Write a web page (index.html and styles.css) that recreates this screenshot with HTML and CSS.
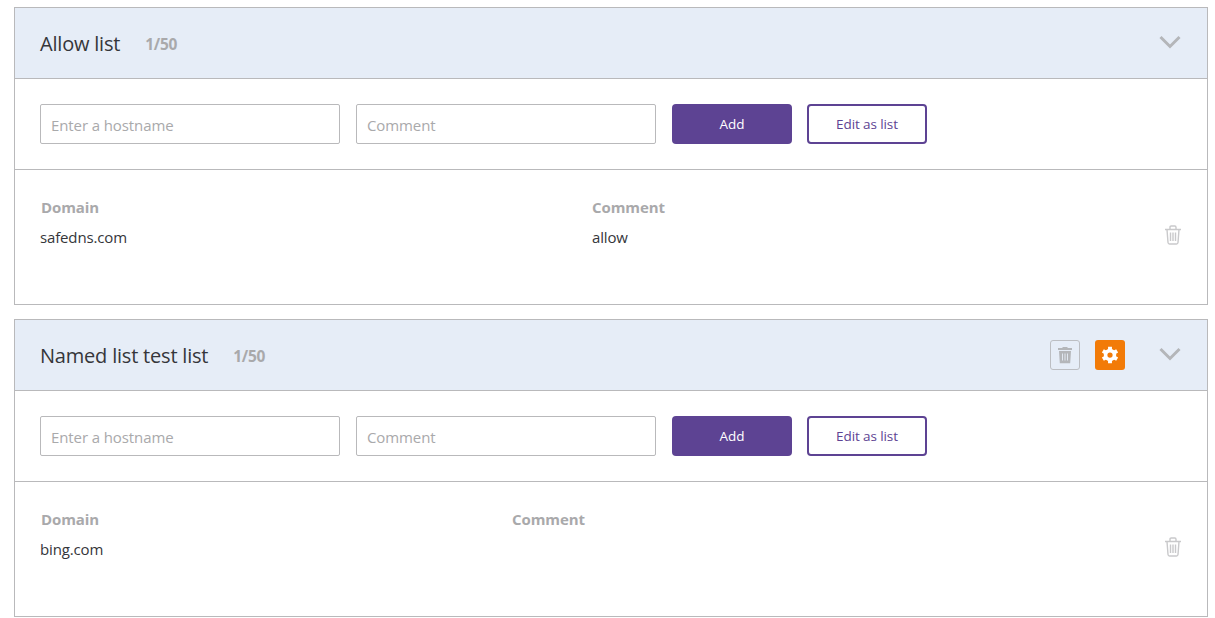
FILE: index.html
```html
<!DOCTYPE html>
<html lang="en">
<head>
<meta charset="utf-8">
<title>Lists</title>
<link rel="stylesheet" href="styles.css">
</head>
<body>
<svg class="defs" width="0" height="0" aria-hidden="true">
  <symbol id="trash" viewBox="0 0 18 20">
    <path d="M1 4.500h16M6 4.500V2.200C6 1.500 6.500 1 7.200 1h3.600c.7 0 1.200.5 1.200 1.200v2.300M3 4.500l1 13c.1.900.7 1.500 1.500 1.500h7c.8 0 1.400-.6 1.500-1.500l1-13M6.500 7.500v8.500M9 7.500v8.500M11.500 7.500v8.500" fill="none" stroke="currentColor" stroke-width="1.400"/>
  </symbol>
  <symbol id="chevron" viewBox="0 0 22 14">
    <path d="M1.500 2 11 11.500 20.500 2" fill="none" stroke="currentColor" stroke-width="3"/>
  </symbol>
</svg>

<section class="panel">
  <header class="panel-head">
    <h2 class="panel-title">Allow list</h2>
    <span class="panel-count">1/50</span>
    <svg class="chevron"><use href="#chevron"/></svg>
  </header>
  <form class="entry-row">
    <input class="field" type="text" placeholder="Enter a hostname">
    <input class="field" type="text" placeholder="Comment">
    <button class="btn btn-primary" type="button">Add</button>
    <button class="btn btn-outline" type="button">Edit as list</button>
  </form>
  <div class="entries entries-wide">
    <span class="col-label">Domain</span>
    <span class="col-label">Comment</span>
    <span></span>
    <span class="cell">safedns.com</span>
    <span class="cell">allow</span>
    <svg class="row-trash"><use href="#trash"/></svg>
  </div>
</section>

<section class="panel">
  <header class="panel-head">
    <h2 class="panel-title">Named list test list</h2>
    <span class="panel-count">1/50</span>
    <span class="head-actions">
      <span class="icon-btn icon-btn-muted">
        <svg class="head-trash" viewBox="0 0 16 18"><path d="M5.500 2V1h5v1H15v2H1V2zM2 5h12l-.8 12.200H2.800z" fill="currentColor"/><path d="M5.500 7.500v7M8 7.500v7M10.500 7.500v7" stroke="#e6edf7" stroke-width=".9"/></svg>
      </span>
      <span class="icon-btn icon-btn-orange">
        <svg class="gear" viewBox="0 0 24 24" fill="none" stroke="currentColor">
          <circle cx="12" cy="12" r="5.900" stroke-width="4.800"/>
          <path stroke-width="5.200" d="M12 1v5M12 18v5M2.470 6.500l4.330 2.500M17.200 15l4.330 2.500M2.470 17.500l4.330-2.500M17.200 9l4.330-2.500"/>
        </svg>
      </span>
    </span>
    <svg class="chevron chevron-after-actions"><use href="#chevron"/></svg>
  </header>
  <form class="entry-row">
    <input class="field" type="text" placeholder="Enter a hostname">
    <input class="field" type="text" placeholder="Comment">
    <button class="btn btn-primary" type="button">Add</button>
    <button class="btn btn-outline" type="button">Edit as list</button>
  </form>
  <div class="entries entries-narrow">
    <span class="col-label">Domain</span>
    <span class="col-label">Comment</span>
    <span></span>
    <span class="cell">bing.com</span>
    <span class="cell"></span>
    <svg class="row-trash"><use href="#trash"/></svg>
  </div>
</section>
</body>
</html>
```

FILE: styles.css
```css
* { box-sizing: border-box; }

html, body { height: 100%; overflow: hidden; }

body {
  margin: 0;
  padding: 7px 7px 0 14px;
  background: #fff;
  color: #35363a;
  font-family: "Open Sans", "Noto Sans", sans-serif;
}

.defs { position: absolute; }

.panel {
  height: 298px;
  margin-bottom: 14px;
  border: 1px solid #b9b9bb;
}

.panel-head {
  display: flex;
  align-items: center;
  height: 71px;
  padding: 0 26px 0 25px;
  background: #e6edf7;
  border-bottom: 1px solid #b9b9bb;
}

.panel-title {
  margin: 0;
  font-size: 20px;
  font-weight: 500;
  letter-spacing: -0.2px;
  color: #35363a;
}

.panel-count {
  margin-left: 25px;
  padding-top: 1px;
  font-size: 15.500px;
  font-weight: 700;
  letter-spacing: -0.3px;
  color: #a9a9ab;
}

.chevron {
  width: 22px;
  height: 14px;
  margin-bottom: 2px;
  margin-left: auto;
  color: #b4b6b9;
}

.chevron-after-actions { margin-left: 34px; }

.head-actions {
  display: flex;
  gap: 15px;
  margin-left: auto;
}

.icon-btn {
  display: flex;
  align-items: center;
  justify-content: center;
  width: 30px;
  height: 30px;
  border-radius: 3px;
}

.icon-btn-muted {
  border: 1px solid #bcbec2;
  color: #b4b6b9;
}

.icon-btn-orange {
  background: #f27b08;
  color: #fff;
}

.head-trash { width: 16px; height: 18px; }

.gear { width: 18px; height: 18px; }

.entry-row {
  display: flex;
  align-items: center;
  height: 91px;
  padding: 0 25px;
  border-bottom: 1px solid #b9b9bb;
}

.field {
  width: 300px;
  height: 40px;
  margin-right: 16px;
  padding: 2px 10px 0;
  border: 1px solid #b9b9bb;
  border-radius: 2px;
  outline: none;
  font-family: inherit;
  font-size: 15px;
  letter-spacing: -0.1px;
  color: #35363a;
}

.field::placeholder { color: #a9a9ab; opacity: 1; }

.btn {
  width: 120px;
  height: 40px;
  border-radius: 4px;
  font-family: inherit;
  font-size: 13.500px;
  letter-spacing: -0.1px;
}

.btn-primary {
  background: #5d4393;
  border: 0;
  color: #fff;
}

.btn-outline {
  margin-left: 15px;
  background: #fff;
  border: 2px solid #5d4393;
  color: #5d4393;
}

.entries {
  display: grid;
  grid-template-rows: 30px 30px;
  align-items: center;
  padding: 22px 25px 0;
}

.entries-wide { grid-template-columns: 552px 1fr 18px; }

.entries-narrow { grid-template-columns: 472px 1fr 18px; }

.col-label {
  font-size: 15px;
  font-weight: 700;
  letter-spacing: -0.1px;
  color: #a9a9ab;
}

.col-label:first-child { padding-left: 1px; }

.cell {
  font-size: 15px;
  letter-spacing: -0.15px;
  color: #35363a;
}

.row-trash {
  width: 18px;
  height: 20px;
  margin-bottom: 4px;
  color: #c9c9cb;
}
```
